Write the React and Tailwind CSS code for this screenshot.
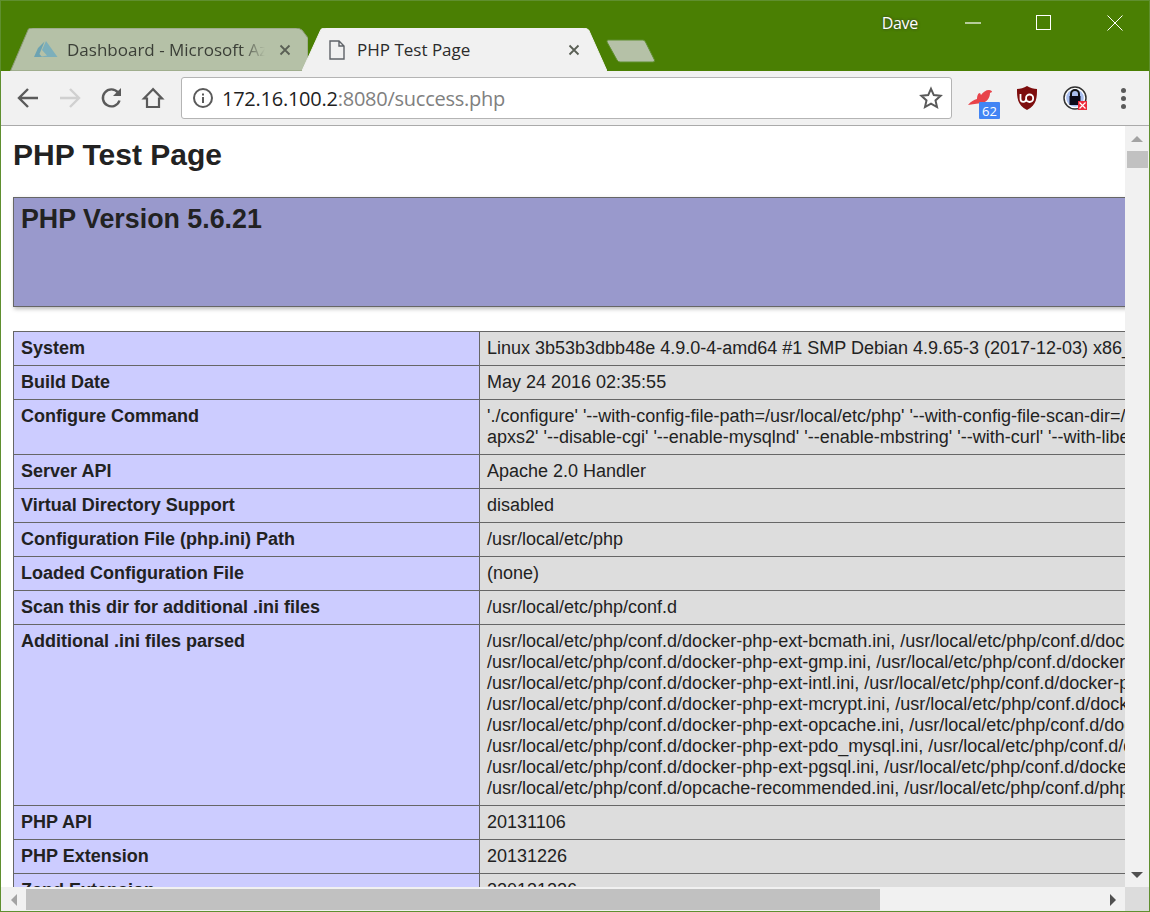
import React from "react";

function TabBg({ d, fill, stroke }) {
  return (
    <svg className="absolute inset-0 w-full h-full" viewBox="0 0 100 43" preserveAspectRatio="none">
      <path d={d} fill={fill} stroke={stroke} strokeWidth="1" vectorEffect="non-scaling-stroke" />
    </svg>
  );
}

function Close({ c = "#5a5f55" }) {
  return (
    <svg width="12" height="12" viewBox="0 0 12 12" className="shrink-0">
      <path d="M1.5 1.5l9 9M10.5 1.5l-9 9" stroke={c} strokeWidth="1.8" />
    </svg>
  );
}

function Azure() {
  return (
    <svg width="24" height="17" viewBox="0 0 24 17" className="shrink-0 opacity-80">
      <path d="M10.500 0.500L4 7 0 16h8L5.500 13z" fill="#5b9cb5" />
      <path d="M12 0L8 9l5 5.500L5 16h18.500z" fill="#6fabc0" />
    </svg>
  );
}

const Row = ({ k, children }) => (
  <tr>
    <td className="w-[466px] bg-[#ccccff] border border-[#666666] px-[7px] pt-[6px] pb-[6px] align-top font-bold whitespace-nowrap">{k}</td>
    <td className="bg-[#dddddd] border border-[#666666] px-[7px] pt-[6px] pb-[6px] align-top whitespace-nowrap">{children}</td>
  </tr>
);

export default function App() {
  return (
    <div className="w-[1150px] h-[912px] bg-[#5f8f2f] flex flex-col overflow-hidden font-['Liberation_Sans',Arial,sans-serif] px-px pb-px pt-px">
      {/* title bar */}
      <div className="h-[70px] shrink-0 flex relative bg-[#4a7f03]">
        <div className="flex items-end pl-[8px] w-full">
          <div className="relative w-[299px] h-[43px] flex items-center pl-[25px] pr-[15px]">
            <TabBg d="M0.5 43 L6.5 1 Q7 0 8 0 L96 0 Q97 0 98 2 L100 10 L100 43 Z" fill="#b5c1a7" stroke="#8a9a75" />
            <span className="relative"><Azure /></span>
            <span className="relative ml-[9px] text-[17px] text-[#3b3f37] font-['Open_Sans',sans-serif] w-[198px] overflow-hidden whitespace-nowrap [mask-image:linear-gradient(to_right,black_88%,transparent)]">Dashboard - Microsoft Azure</span>
            <span className="relative ml-auto mr-[2px]"><Close /></span>
          </div>
          <div className="relative w-[305px] h-[43px] -ml-[6px] flex items-center pl-[27px] pr-[27px]">
            <TabBg d="M0 43 L6.2 1.5 Q6.5 0 8 0 L92 0 Q93.4 0 94 2 L100 43 Z" fill="#f1f1f1" stroke="#f1f1f1" />
            <svg width="16" height="20" viewBox="0 0 16 20" className="relative shrink-0">
              <path d="M1 1h9l5 5v13H1z M10 1v5h5" fill="none" stroke="#5f6368" strokeWidth="1.4" />
            </svg>
            <span className="relative ml-[12px] text-[17px] text-[#2b2b2b] font-['Open_Sans',sans-serif] flex-1 whitespace-nowrap">PHP Test Page</span>
            <span className="relative"><Close /></span>
          </div>
          <svg width="50" height="24" viewBox="0 0 50 24" className="mb-[8px] -ml-[1px]">
            <path d="M2 1L37 1Q38.500 1 39.500 3L48.500 21Q49 23 47 23L14 23Q12 23 11 21L1 3Q0.500 1 2 1z" fill="#b5c1a7" stroke="#5f8f2f" />
          </svg>
        </div>
        <div className="absolute top-[11px] right-0 flex items-start">
          <span className="text-[16px] text-white mr-[18px] font-['Open_Sans',sans-serif] tracking-[-0.3px] leading-[22px] [text-shadow:0_0_3px_#333]">Dave</span>
          <div className="w-[71px] h-[22px] flex items-center justify-center pl-[2px]"><svg width="16" height="16" viewBox="0 0 16 16"><path d="M0 8h16" stroke="#fff" strokeWidth="1.2" /></svg></div>
          <div className="w-[71px] h-[22px] flex items-center justify-center pl-[2px]"><svg width="16" height="16" viewBox="0 0 16 16"><rect x="0.5" y="0.5" width="14" height="14" fill="none" stroke="#fff" /></svg></div>
          <div className="w-[71px] h-[22px] flex items-center justify-center pl-[2px]"><svg width="16" height="16" viewBox="0 0 16 16"><path d="M0.5 0.5l15 15M15.500 0.500l-15 15" stroke="#fff" strokeWidth="1" /></svg></div>
        </div>
      </div>

      {/* toolbar */}
      <div className="h-[55px] shrink-0 bg-[#f1f1f1] border-b border-b-[#aaaaaa] flex items-center pl-[15px] pr-[16px]">
        <svg width="24" height="24" viewBox="0 0 24 24" className="shrink-0"><path d="M22 12H4M12 3l-9 9 9 9" fill="none" stroke="#5a5a5a" strokeWidth="2.4" /></svg>
        <svg width="24" height="24" viewBox="0 0 24 24" className="shrink-0 ml-[18px]"><path d="M2 12h18M12 3l9 9-9 9" fill="none" stroke="#d0d0d0" strokeWidth="2.4" /></svg>
        <svg width="24" height="24" viewBox="0 0 24 24" className="shrink-0 ml-[18px]"><path d="M19.500 14.500A8.500 8.500 0 1 1 18 6.500" fill="none" stroke="#5a5a5a" strokeWidth="2.4" /><path d="M21 2v8h-8z" fill="#5a5a5a" /></svg>
        <svg width="24" height="24" viewBox="0 0 24 24" className="shrink-0 ml-[17px]"><path d="M12 3.200L3 12.500h3V21h12v-8.500h3z" fill="none" stroke="#5a5a5a" strokeWidth="2.2" /></svg>
        <div className="ml-[16px] w-[771px] h-[42px] bg-white border border-[#b4b4b4] rounded-[3px] flex items-center pl-[10px] pr-[8px] shrink-0">
          <svg width="22" height="22" viewBox="0 0 22 22" className="shrink-0"><circle cx="11" cy="11" r="9" fill="none" stroke="#5a5a5a" strokeWidth="2" /><rect x="10" y="10" width="2" height="6" fill="#5a5a5a" /><rect x="10" y="6.500" width="2" height="2" fill="#5a5a5a" /></svg>
          <span className="ml-[8px] pt-[2px] text-[20px] font-['Open_Sans',sans-serif] tracking-[-0.25px] text-[#1f1f1f] flex-1 whitespace-nowrap">172.16.100.2<span className="text-[#808080]">:8080/success.php</span></span>
          <svg width="24" height="24" viewBox="0 0 24 24" className="shrink-0"><path d="M12 2.800l2.800 6.300 6.800.7-5.100 4.600 1.500 6.700L12 17.600 6 21.100l1.500-6.700-5.100-4.600 6.800-.7z" fill="none" stroke="#5a5a5a" strokeWidth="2" /></svg>
        </div>
        <div className="relative ml-[16px] w-[32px] h-[36px] shrink-0">
          <svg width="25" height="20" viewBox="0 0 25 20" className="absolute left-0 top-[8px]"><path d="M0 17C3 13 6 12 9 11 9 8 10 5 12 5L13 7C15 4 18 2 21 2 23 2 24 3 24 4L22 5C22 10 19 14 14 15 9 16 4 16 0 17z" fill="#e8434a" /></svg>
          <span className="absolute left-[11px] top-[22px] w-[21px] h-[17px] bg-[#4285f4] rounded-[1px] text-white text-[13px] leading-[18px] text-center font-['Open_Sans',sans-serif]">62</span>
        </div>
        <svg width="22" height="24" viewBox="0 0 22 24" className="shrink-0 ml-[16px] -mt-[1px]">
          <path d="M11 0c3 2 7 3 10 3 0 8 0 16-10 21C1 19 1 11 1 3c3 0 7-1 10-3z" fill="#7d0d0d" />
          <path d="M4.500 8v5a2.800 2.800 0 0 0 5.600 0M10.100 13v-1.500a3.500 3 0 0 1 7 0v1.500a3.500 3 0 0 1-7 0z" fill="none" stroke="#fff" strokeWidth="1.800" />
        </svg>
        <div className="relative ml-[25px] w-[24px] h-[24px] shrink-0">
          <svg width="24" height="24" viewBox="0 0 24 24"><circle cx="12" cy="12" r="11" fill="#ffffff" stroke="#333" strokeWidth="1.500" /><circle cx="12" cy="12" r="8.800" fill="#a9bff0" /><path d="M8 10V8a4 4 0 0 1 8 0v2" fill="none" stroke="#111" strokeWidth="2" /><rect x="6.500" y="10" width="11" height="9" fill="#0b0b1a" /></svg>
          <svg width="9" height="9" viewBox="0 0 9 9" className="absolute right-0 bottom-0"><rect width="9" height="9" fill="#ec2a3a" /><path d="M1.500 1.500l6 6M7.500 1.500l-6 6" stroke="#fff" strokeWidth="1.200" /></svg>
        </div>
        <div className="ml-auto flex flex-col gap-[3px] mr-[7px]">
          <span className="w-[5px] h-[5px] rounded-full bg-[#5a5a5a]" />
          <span className="w-[5px] h-[5px] rounded-full bg-[#5a5a5a]" />
          <span className="w-[5px] h-[5px] rounded-full bg-[#5a5a5a]" />
        </div>
      </div>

      {/* viewport */}
      <div className="flex-1 min-h-0 flex flex-col bg-white">
        <div className="flex-1 min-h-0 flex">
          <main className="flex-1 min-w-0 overflow-hidden bg-white text-[#222222] text-[18px] leading-[21px] pl-[12px]">
            <div className="w-[1400px]">
              <h1 className="text-[30px] font-bold leading-[33px] pt-[12px] pb-[26px]">PHP Test Page</h1>
              <div className="w-[1242px] h-[110px] bg-[#9999cc] border border-[#666666] shadow-[1px_2px_4px_#bbbbbb] px-[7px] pt-[6px]">
                <h2 className="text-[26.800px] font-bold leading-[30px]">PHP Version 5.6.21</h2>
              </div>
              <table className="mt-[24px] w-[1242px] border-collapse table-fixed">
                <tbody>
                  <Row k="System">Linux 3b53b3dbb48e 4.9.0-4-amd64 #1 SMP Debian 4.9.65-3 (2017-12-03) x86_64</Row>
                  <Row k="Build Date">May 24 2016 02:35:55</Row>
                  <Row k="Configure Command">'./configure' '--with-config-file-path=/usr/local/etc/php' '--with-config-file-scan-dir=/usr/local/etc/php/conf.d'<br />apxs2' '--disable-cgi' '--enable-mysqlnd' '--enable-mbstring' '--with-curl' '--with-libedit' '--with-openssl'</Row>
                  <Row k="Server API">Apache 2.0 Handler</Row>
                  <Row k="Virtual Directory Support">disabled</Row>
                  <Row k="Configuration File (php.ini) Path">/usr/local/etc/php</Row>
                  <Row k="Loaded Configuration File">(none)</Row>
                  <Row k="Scan this dir for additional .ini files">/usr/local/etc/php/conf.d</Row>
                  <Row k="Additional .ini files parsed">
                    /usr/local/etc/php/conf.d/docker-php-ext-bcmath.ini, /usr/local/etc/php/conf.d/docker-php-ext-bz2.ini,<br />
                    /usr/local/etc/php/conf.d/docker-php-ext-gmp.ini, /usr/local/etc/php/conf.d/docker-php-ext-iconv.ini,<br />
                    /usr/local/etc/php/conf.d/docker-php-ext-intl.ini, /usr/local/etc/php/conf.d/docker-php-ext-mbstring.ini,<br />
                    /usr/local/etc/php/conf.d/docker-php-ext-mcrypt.ini, /usr/local/etc/php/conf.d/docker-php-ext-mysql.ini,<br />
                    /usr/local/etc/php/conf.d/docker-php-ext-opcache.ini, /usr/local/etc/php/conf.d/docker-php-ext-pdo.ini,<br />
                    /usr/local/etc/php/conf.d/docker-php-ext-pdo_mysql.ini, /usr/local/etc/php/conf.d/docker-php-ext-pgsql.ini,<br />
                    /usr/local/etc/php/conf.d/docker-php-ext-pgsql.ini, /usr/local/etc/php/conf.d/docker-php-ext-zip.ini,<br />
                    /usr/local/etc/php/conf.d/opcache-recommended.ini, /usr/local/etc/php/conf.d/php.ini
                  </Row>
                  <Row k="PHP API">20131106</Row>
                  <Row k="PHP Extension">20131226</Row>
                  <Row k="Zend Extension">220131226</Row>
                </tbody>
              </table>
            </div>
          </main>
          {/* vertical scrollbar */}
          <div className="w-[24px] shrink-0 bg-[#f1f1f1] flex flex-col items-center justify-between">
            <div className="flex flex-col items-center w-full">
              <div className="h-[25px] flex items-center justify-center"><svg width="12" height="6" viewBox="0 0 12 6"><path d="M6 0l6 6H0z" fill="#a3a3a3" /></svg></div>
              <div className="w-[21px] h-[17px] bg-[#c1c1c1]" />
            </div>
            <div className="h-[24px] flex items-center justify-center"><svg width="12" height="6" viewBox="0 0 12 6"><path d="M0 0h12L6 6z" fill="#505050" /></svg></div>
          </div>
        </div>
        {/* horizontal scrollbar */}
        <div className="h-[24px] shrink-0 flex">
          <div className="flex-1 bg-[#f1f1f1] flex items-center pt-px">
            <div className="w-[25px] flex items-center justify-center"><svg width="6" height="12" viewBox="0 0 6 12"><path d="M6 0v12L0 6z" fill="#a3a3a3" /></svg></div>
            <div className="w-[854px] h-[21px] bg-[#c1c1c1]" />
            <div className="ml-auto w-[25px] flex items-center justify-center"><svg width="6" height="12" viewBox="0 0 6 12"><path d="M0 0v12l6-6z" fill="#505050" /></svg></div>
          </div>
          <div className="w-[24px] bg-[#dcdcdc]" />
        </div>
      </div>
    </div>
  );
}
